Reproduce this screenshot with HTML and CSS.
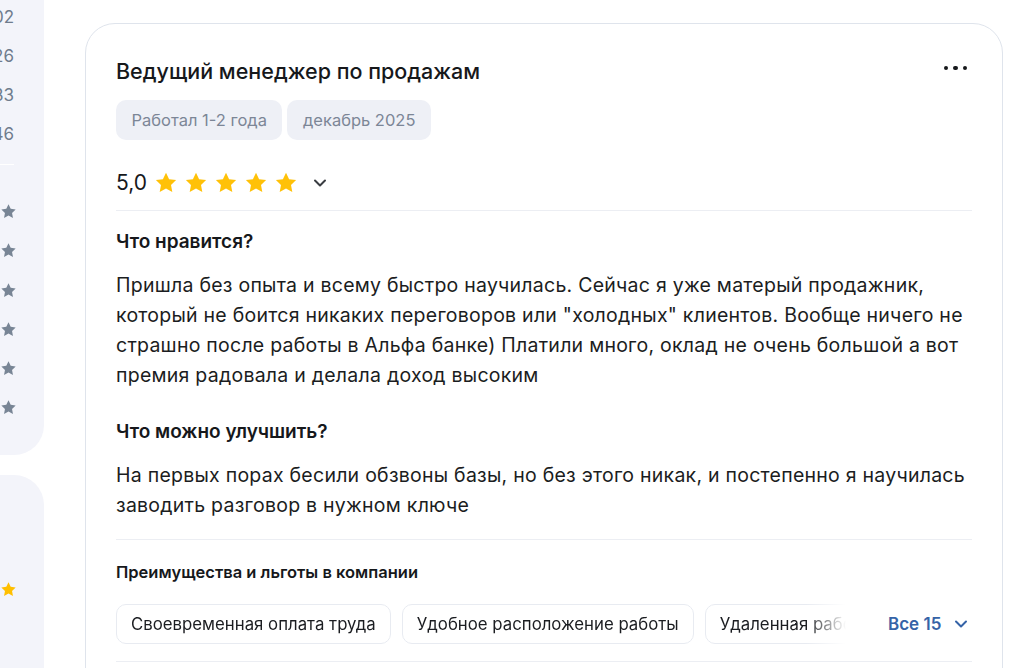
FILE: index.html
```html
<!DOCTYPE html>
<html lang="ru">
<head>
<meta charset="utf-8">
<link rel="stylesheet" href="styles.css">
</head>
<body>
<div class="page">
  <aside class="sidebar">
    <div class="side-panel top">
      <div class="num">02</div>
      <div class="num">26</div>
      <div class="num">33</div>
      <div class="num">46</div>
      <div class="side-line"></div>
      <div class="side-star"><svg viewBox="0 0 24 24"><path d="M12 1.8l3.1 6.4 7 .9-5.1 4.9 1.3 7-6.3-3.4-6.3 3.4 1.3-7L1.9 9.1l7-.9z"/></svg></div>
      <div class="side-star"><svg viewBox="0 0 24 24"><path d="M12 1.8l3.1 6.4 7 .9-5.1 4.9 1.3 7-6.3-3.4-6.3 3.4 1.3-7L1.9 9.1l7-.9z"/></svg></div>
      <div class="side-star"><svg viewBox="0 0 24 24"><path d="M12 1.8l3.1 6.4 7 .9-5.1 4.9 1.3 7-6.3-3.4-6.3 3.4 1.3-7L1.9 9.1l7-.9z"/></svg></div>
      <div class="side-star"><svg viewBox="0 0 24 24"><path d="M12 1.8l3.1 6.4 7 .9-5.1 4.9 1.3 7-6.3-3.4-6.3 3.4 1.3-7L1.9 9.1l7-.9z"/></svg></div>
      <div class="side-star"><svg viewBox="0 0 24 24"><path d="M12 1.8l3.1 6.4 7 .9-5.1 4.9 1.3 7-6.3-3.4-6.3 3.4 1.3-7L1.9 9.1l7-.9z"/></svg></div>
      <div class="side-star"><svg viewBox="0 0 24 24"><path d="M12 1.8l3.1 6.4 7 .9-5.1 4.9 1.3 7-6.3-3.4-6.3 3.4 1.3-7L1.9 9.1l7-.9z"/></svg></div>
    </div>
    <div class="side-panel bottom">
      <div class="side-star gold"><svg viewBox="0 0 24 24"><path d="M12 1.8l3.1 6.4 7 .9-5.1 4.9 1.3 7-6.3-3.4-6.3 3.4 1.3-7L1.9 9.1l7-.9z"/></svg></div>
    </div>
  </aside>

  <main class="card">
    <div class="card-head">
      <h2 class="title">Ведущий менеджер по продажам</h2>
      <button class="more" aria-label="Ещё"><span></span><span></span><span></span></button>
    </div>
    <div class="tags">
      <span class="tag">Работал 1-2 года</span>
      <span class="tag">декабрь 2025</span>
    </div>
    <div class="rating">
      <span class="score">5,0</span>
      <div class="stars">
        <svg viewBox="0 0 24 24"><path d="M12 1.8l3.1 6.4 7 .9-5.1 4.9 1.3 7-6.3-3.4-6.3 3.4 1.3-7L1.9 9.1l7-.9z"/></svg>
        <svg viewBox="0 0 24 24"><path d="M12 1.8l3.1 6.4 7 .9-5.1 4.9 1.3 7-6.3-3.4-6.3 3.4 1.3-7L1.9 9.1l7-.9z"/></svg>
        <svg viewBox="0 0 24 24"><path d="M12 1.8l3.1 6.4 7 .9-5.1 4.9 1.3 7-6.3-3.4-6.3 3.4 1.3-7L1.9 9.1l7-.9z"/></svg>
        <svg viewBox="0 0 24 24"><path d="M12 1.8l3.1 6.4 7 .9-5.1 4.9 1.3 7-6.3-3.4-6.3 3.4 1.3-7L1.9 9.1l7-.9z"/></svg>
        <svg viewBox="0 0 24 24"><path d="M12 1.8l3.1 6.4 7 .9-5.1 4.9 1.3 7-6.3-3.4-6.3 3.4 1.3-7L1.9 9.1l7-.9z"/></svg>
      </div>
      <svg class="chev" viewBox="0 0 14 10"><path d="M2 2.5l5 5 5-5"/></svg>
    </div>
    <div class="divider"></div>

    <h3 class="q q1">Что нравится?</h3>
    <p class="answer">Пришла без опыта и всему быстро научилась. Сейчас я уже матерый продажник, который не боится никаких переговоров или "холодных" клиентов. Вообще ничего не страшно после работы в Альфа банке) Платили много, оклад не очень большой а вот премия радовала и делала доход высоким</p>

    <h3 class="q q2">Что можно улучшить?</h3>
    <p class="answer">На первых порах бесили обзвоны базы, но без этого никак, и постепенно я научилась заводить разговор в нужном ключе</p>

    <div class="divider d2"></div>
    <h4 class="benefits-title">Преимущества и льготы в компании</h4>
    <div class="benefits">
      <div class="chips">
        <span class="chip">Своевременная оплата труда</span>
        <span class="chip">Удобное расположение работы</span>
        <span class="chip">Удаленная работа</span>
      </div>
      <button class="all">Все 15 <svg viewBox="0 0 14 10"><path d="M2 2.5l5 5 5-5"/></svg></button>
    </div>
    <div class="divider d3"></div>
  </main>
</div>
</body>
</html>
```

FILE: styles.css
```css
* { box-sizing: border-box; }
html, body { margin: 0; padding: 0; background: #fff; }
body {
  font-family: Inter, Roboto, "Noto Sans", "Liberation Sans", sans-serif;
  color: #1b1d21;
  width: 1019px;
  height: 668px;
  overflow: hidden;
}
.page {
  display: flex;
  align-items: flex-start;
  gap: 41px;
}

/* sidebar */
.sidebar {
  width: 44px;
  flex: none;
  display: flex;
  flex-direction: column;
  gap: 20px;
}
.side-panel {
  background: #f3f4fa;
  padding-right: 30px;
  display: flex;
  flex-direction: column;
  align-items: flex-end;
}
.side-panel.top {
  height: 455px;
  border-bottom-right-radius: 30px;
  padding-top: 6px;
}
.side-panel.bottom {
  height: 200px;
  border-top-right-radius: 30px;
  padding-top: 106px;
}
.num {
  font-size: 17px;
  line-height: 22px;
  height: 39px;
  color: #6f7c8d;
}
.side-line {
  height: 1px;
  background: #fff;
  margin-top: 2px;
  margin-bottom: 38px;
  align-self: flex-start;
  width: 14px;
}
.side-star {
  width: 17px;
  height: 39.3px;
  margin-right: -3px;
}
.side-star svg {
  width: 17px;
  height: 17px;
  fill: #788595;
  display: block;
}
.side-star.gold svg { fill: #ffbf00; }

/* card */
.card {
  width: 918px;
  height: 700px;
  flex: none;
  margin-top: 23px;
  border: 1px solid #dfe4ec;
  border-radius: 30px;
  padding: 32px 30px 0 30px;
}
.card-head {
  display: flex;
  align-items: center;
  justify-content: space-between;
  height: 30px;
}
.title {
  margin: 0;
  font-size: 21.5px;
  font-weight: 500;
  line-height: 30px;
  color: #16181b;
}
.more {
  border: 0;
  background: none;
  padding: 0;
  display: flex;
  gap: 5px;
  margin-right: 5px;
  margin-top: -6px;
}
.more span {
  width: 4.5px;
  height: 4.5px;
  border-radius: 50%;
  background: #16181b;
}
.tags {
  display: flex;
  gap: 5px;
  margin-top: 14px;
}
.tag {
  height: 40px;
  line-height: 40px;
  padding: 0 15.5px;
  border-radius: 10px;
  background: #eef0f6;
  color: #7c8696;
  font-size: 16.5px;
}
.rating {
  display: flex;
  align-items: center;
  height: 30px;
  margin-top: 28px;
}
.score {
  font-size: 21px;
  line-height: 30px;
  color: #16181b;
  margin-right: 7px;
}
.stars {
  display: flex;
  gap: 6px;
}
.stars svg {
  width: 24px;
  height: 24px;
  fill: #ffc108;
  display: block;
}
.chev {
  width: 14px;
  height: 10px;
  margin-left: 15px;
  fill: none;
  stroke: #3a3d42;
  stroke-width: 2;
  stroke-linecap: round;
  stroke-linejoin: round;
}
.divider {
  height: 1px;
  background: #eceef3;
  margin-top: 12px;
}
.q {
  margin: 0;
  font-size: 19px;
  font-weight: 600;
  line-height: 26px;
  color: #16181b;
}
.q1 { margin-top: 18px; }
.q2 { margin-top: 29px; }
.answer {
  margin: 15px 0 0;
  font-size: 19.5px;
  letter-spacing: 0.25px;
  line-height: 30px;
  color: #1b1d21;
}
.divider.d2 { margin-top: 19px; }
.benefits-title {
  margin: 20px 0 0;
  font-size: 16.5px;
  font-weight: 600;
  line-height: 24px;
  color: #16181b;
}
.benefits {
  display: flex;
  align-items: center;
  margin-top: 20px;
  height: 40px;
}
.chips {
  display: flex;
  gap: 11px;
  width: 735px;
  overflow: hidden;
  flex: none;
  -webkit-mask-image: linear-gradient(to right, #000 690px, transparent 730px);
  mask-image: linear-gradient(to right, #000 690px, transparent 730px);
}
.chip {
  flex: none;
  height: 40px;
  line-height: 38px;
  padding: 0 14px;
  border: 1px solid #e8ebf1;
  border-radius: 10px;
  font-size: 16.8px;
  color: #1b1d21;
  white-space: nowrap;
}
.all {
  margin-left: 37px;
  border: 0;
  background: none;
  padding: 0;
  font-family: inherit;
  font-size: 17px;
  font-weight: 600;
  color: #3563a7;
  display: flex;
  align-items: center;
  gap: 13px;
}
.all svg {
  width: 14px;
  height: 10px;
  fill: none;
  stroke: #3563a7;
  stroke-width: 2;
  stroke-linecap: round;
  stroke-linejoin: round;
}
.divider.d3 { margin-top: 17px; }
```
